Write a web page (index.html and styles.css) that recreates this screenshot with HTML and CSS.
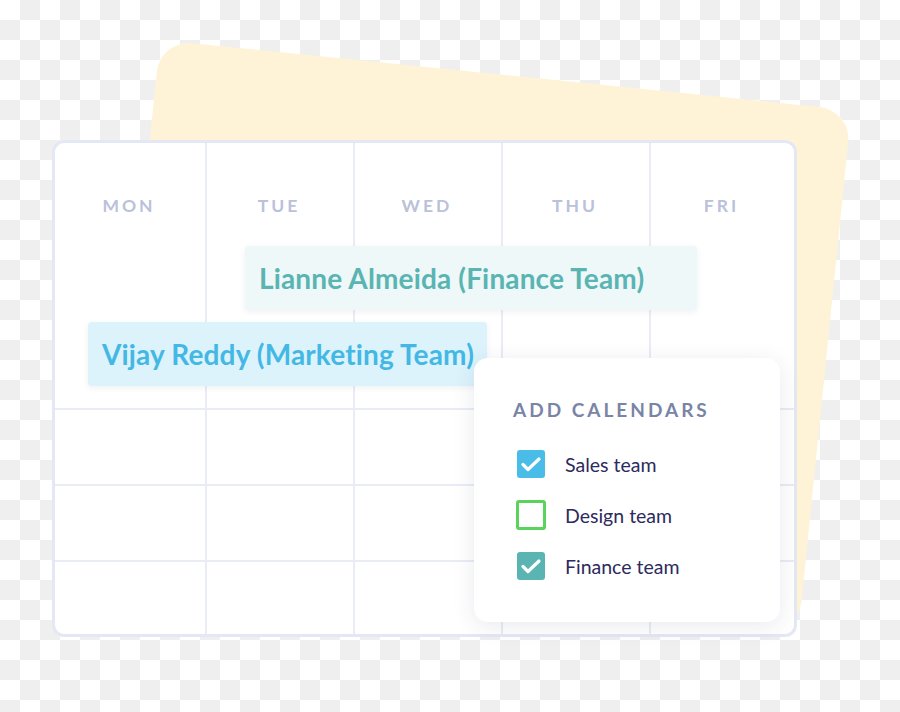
FILE: index.html
```html
<!DOCTYPE html>
<html lang="en">
<head>
<meta charset="utf-8">
<title>Calendar</title>
<link rel="stylesheet" href="styles.css">
</head>
<body>
<div class="stage">
  <div class="backdrop"></div>
  <div class="calendar">
    <div class="cell head"><span class="day">MON</span></div>
    <div class="cell head"><span class="day">TUE</span></div>
    <div class="cell head"><span class="day">WED</span></div>
    <div class="cell head"><span class="day">THU</span></div>
    <div class="cell head last-col"><span class="day">FRI</span></div>
    <div class="cell"></div><div class="cell"></div><div class="cell"></div><div class="cell"></div><div class="cell last-col"></div>
    <div class="cell"></div><div class="cell"></div><div class="cell"></div><div class="cell"></div><div class="cell last-col"></div>
    <div class="cell last-row"></div><div class="cell last-row"></div><div class="cell last-row"></div><div class="cell last-row"></div><div class="cell last-row last-col"></div>
  </div>
  <div class="event event-finance">Lianne Almeida (Finance Team)</div>
  <div class="event event-marketing">Vijay Reddy (Marketing Team)</div>
  <div class="popup">
    <h2 class="popup-title">ADD CALENDARS</h2>
    <ul class="options">
      <li class="option">
        <span class="box box-sales"><svg viewBox="0 0 28 28" width="28" height="28"><polyline points="6,14.5 11,19.5 22,9" fill="none" stroke="#fff" stroke-width="3.2" stroke-linecap="round" stroke-linejoin="round"/></svg></span>
        <span class="label">Sales team</span>
      </li>
      <li class="option">
        <span class="box box-design"></span>
        <span class="label">Design team</span>
      </li>
      <li class="option">
        <span class="box box-finance"><svg viewBox="0 0 28 28" width="28" height="28"><polyline points="6,14.5 11,19.5 22,9" fill="none" stroke="#fff" stroke-width="3.2" stroke-linecap="round" stroke-linejoin="round"/></svg></span>
        <span class="label">Finance team</span>
      </li>
    </ul>
  </div>
</div>
</body>
</html>
```

FILE: styles.css
```css
* { box-sizing: border-box; }

html, body {
  margin: 0;
  padding: 0;
}

body {
  font-family: Lato, "Open Sans", sans-serif;
  background: repeating-conic-gradient(#efefef 0 25%, #ffffff 0 50%) 0 0 / 40px 40px;
}

.stage {
  position: relative;
  width: 900px;
  height: 712px;
  padding: 140px 0 0 52px;
  overflow: hidden;
}

.backdrop {
  position: absolute;
  left: 160px;
  top: 40px;
  width: 695px;
  height: 525px;
  background: #fff3d7;
  border-radius: 32px;
  transform-origin: 0 0;
  transform: rotate(5.8deg);
}

.calendar {
  position: relative;
  width: 745px;
  height: 497px;
  background: #ffffff;
  border: 3px solid #e4e8f5;
  border-radius: 12px;
  display: grid;
  grid-template-columns: 152px 148px 148px 148px 1fr;
  grid-template-rows: 267px 76px 76px 1fr;
  overflow: hidden;
}

.cell {
  border-right: 2px solid #e9ecf5;
  border-bottom: 2px solid #e9ecf5;
}

.cell.last-col { border-right: none; }
.cell.last-row { border-bottom: none; }

.head {
  display: flex;
  justify-content: center;
  padding: 53px 2px 0 0;
}

.day {
  font-size: 17.5px;
  line-height: 20px;
  font-weight: 700;
  letter-spacing: 3px;
  color: #bac1da;
}

.event {
  position: absolute;
  display: flex;
  align-items: center;
  height: 64px;
  padding-left: 14px;
  border-radius: 4px;
  font-size: 28px;
  letter-spacing: 0.15px;
  font-weight: 700;
  white-space: nowrap;
  box-shadow: 0 2px 6px rgba(60, 80, 120, 0.08);
}

.event-finance {
  left: 245px;
  top: 246px;
  width: 452px;
  background: #eef8f9;
  color: #5ab4b2;
}

.event-marketing {
  left: 88px;
  top: 322px;
  width: 399px;
  background: #dcf3fc;
  color: #44b8e5;
}

.popup {
  position: absolute;
  left: 474px;
  top: 358px;
  width: 306px;
  height: 264px;
  background: #ffffff;
  border-radius: 14px;
  box-shadow: 0 4px 22px rgba(40, 50, 90, 0.10);
  padding: 41px 0 0 39px;
}

.popup-title {
  margin: 0;
  font-size: 19px;
  line-height: 22px;
  font-weight: 700;
  letter-spacing: 3px;
  color: #7984a6;
}

.options {
  list-style: none;
  margin: 29px 0 0 4px;
  padding: 0;
  display: flex;
  flex-direction: column;
  gap: 23px;
}

.option {
  display: flex;
  align-items: center;
  gap: 20px;
  height: 28px;
}

.box {
  width: 28px;
  height: 28px;
  border-radius: 3px;
  display: block;
  flex: none;
}

.box svg { display: block; }

.box-sales { background: #49bde7; }
.box-design { border: 3px solid #5ad35a; background: #fff; width: 30px; height: 30px; margin-left: -1px; margin-right: -1px; }
.box-finance { background: #5ab4b2; }

.label {
  font-size: 19.5px;
  color: #2d2a5e;
  font-weight: 400;
}
```
